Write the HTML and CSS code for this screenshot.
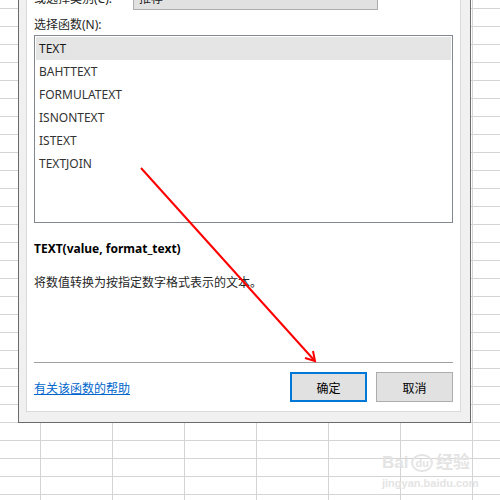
FILE: index.html
```html
<!DOCTYPE html>
<html lang="zh-CN">
  <head>
    <meta charset="UTF-8" />
    <title>插入函数</title>
    <link rel="stylesheet" href="styles.css">
  </head>

  <body>
    <!-- Insert Function dialog over the sheet -->
    <div class="dialog">
      <div class="panel">
        <div class="category-row">
          <span class="label category-label">或选择类别(C):</span>
          <div class="select">推荐</div>
        </div>

        <div class="label list-label">选择函数(N):</div>
        <ul class="listbox">
          <li class="selected">TEXT</li>
          <li>BAHTTEXT</li>
          <li>FORMULATEXT</li>
          <li>ISNONTEXT</li>
          <li>ISTEXT</li>
          <li>TEXTJOIN</li>
        </ul>

        <div class="info">
          <div class="signature">TEXT(value, format_text)</div>
          <div class="description">将数值转换为按指定数字格式表示的文本。</div>
        </div>

        <div class="footer">
          <a class="help-link" href="#">有关该函数的帮助</a>
          <div class="buttons">
            <button class="btn btn-default">确定</button>
            <button class="btn">取消</button>
          </div>
        </div>
      </div>
    </div>

    <!-- red annotation arrow -->
    <svg class="annotation" width="500" height="500" viewBox="0 0 500 500">
      <path d="M141 168 L314 360" />
      <path d="M305 358 L315 361 L313 351" />
    </svg>

    <div class="watermark">
      <div class="wm-logo"><span>Bai</span><span class="wm-du">du</span><span>经验</span></div>
      <div class="wm-url">jingyan.baidu.com</div>
    </div>
  </body>
</html>
```

FILE: styles.css
```css
/* Sheet */
body {
  margin: 0;
  width: 500px;
  height: 500px;
  overflow: hidden;
  position: relative;
  background-color: #fff;
  background-image:
    linear-gradient(to bottom, #d4d4d4 1px, transparent 1px),
    linear-gradient(to right, #d4d4d4 1px, transparent 1px);
  background-size: 100% 18px, 72px 100%;
  background-position: 0 8px, 40px 0;
  font-family: "Noto Sans", "Noto Sans CJK SC", sans-serif;
  font-size: 12px;
  color: #1e1e1e;
}

/* Dialog */
.dialog {
  position: absolute;
  left: 18px;
  top: -20px;
  width: 453px;
  box-sizing: border-box;
  background: #f0f0f0;
  border: 1px solid #6b6b6b;
  border-top: none;
  padding: 0 9px 10px 7px;
}

.panel {
  background: #fff;
  border: 1px solid #dadada;
  padding: 7px 7px 9px 7px;
}

.label {
  line-height: 16px;
  color: #262626;
}

.category-row {
  display: flex;
  align-items: center;
  height: 22px;
}

.category-label {
  width: 99px;
}

.select {
  width: 245px;
  height: 22px;
  box-sizing: border-box;
  background: #e1e1e1;
  border: 1px solid #adadad;
  padding-left: 5px;
  line-height: 20px;
}

.list-label {
  margin-top: 7px;
}

/* Function list */
.listbox {
  list-style: none;
  margin: 2px 0 0;
  padding: 1px;
  height: 188px;
  box-sizing: border-box;
  border: 1px solid #828790;
}

.listbox li {
  height: 23px;
  line-height: 23px;
  padding-left: 3px;
  color: #333;
}

.listbox li.selected {
  background: #e5e5e5;
  color: #1a1a1a;
}

.info {
  height: 139px;
  box-sizing: border-box;
  padding-top: 18px;
}

.signature {
  line-height: 16px;
  font-weight: bold;
  color: #000;
}

.description {
  margin-top: 18px;
  line-height: 16px;
  color: #262626;
}

/* Footer */
.footer {
  border-top: 1px solid #a0a0a0;
  padding-top: 9px;
  display: flex;
  justify-content: space-between;
  align-items: center;
}

.help-link {
  color: #0066cc;
  text-decoration: underline;
  margin-top: 1px;
}

.buttons {
  display: flex;
  gap: 9px;
}

.btn {
  width: 77px;
  height: 30px;
  box-sizing: border-box;
  background: #e1e1e1;
  border: 1px solid #adadad;
  font-family: "Noto Sans CJK SC", sans-serif;
  font-size: 12px;
  color: #000;
  padding: 0;
}

.btn-default {
  border: 2px solid #0078d7;
}

/* Annotation */
.annotation {
  position: absolute;
  left: 0;
  top: 0;
  fill: none;
  stroke: #ff0000;
  stroke-width: 2;
}

.watermark {
  position: absolute;
  left: 382px;
  top: 452px;
  color: #e4e4e4;
  font-weight: bold;
  font-family: "Liberation Sans", "Noto Sans CJK SC", sans-serif;
}

.wm-logo {
  font-size: 17px;
  line-height: 22px;
  display: flex;
  align-items: center;
}

.wm-du {
  font-size: 11px;
  border: 2px solid #e4e4e4;
  border-radius: 50%;
  padding: 0 2px;
  margin: 0 3px;
  line-height: 14px;
}

.wm-url {
  font-size: 11px;
  line-height: 14px;
  margin-top: 2px;
}
```
